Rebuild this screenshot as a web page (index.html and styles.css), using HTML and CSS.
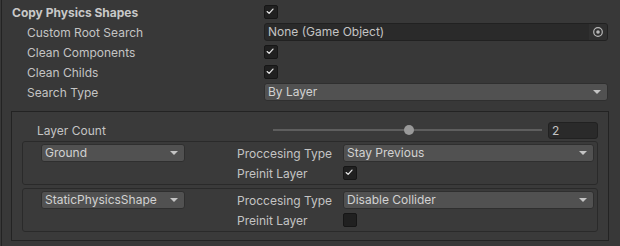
FILE: index.html
```html
<!DOCTYPE html>
<html lang="en">
<head>
    <meta charset="UTF-8">
    <title>Copy Physics Shapes</title>
    <link rel="stylesheet" href="styles.css">
</head>
<body>
    <div class="inspector">
        <div class="row">
            <span class="label header">Copy Physics Shapes</span>
            <span class="toggle on"><svg viewBox="0 0 14 14"><path d="M3.5 7.5 L5.8 9.6 L10.3 4.6"/></svg></span>
        </div>
        <div class="row">
            <span class="label sub">Custom Root Search</span>
            <div class="object-field">
                <span class="object-name">None (Game Object)</span>
                <span class="picker"><svg viewBox="0 0 18 16"><circle cx="9" cy="8" r="4.3"/><circle class="dot" cx="9" cy="8" r="1.8"/></svg></span>
            </div>
        </div>
        <div class="row">
            <span class="label sub">Clean Components</span>
            <span class="toggle on"><svg viewBox="0 0 14 14"><path d="M3.5 7.5 L5.8 9.6 L10.3 4.6"/></svg></span>
        </div>
        <div class="row">
            <span class="label sub">Clean Childs</span>
            <span class="toggle on"><svg viewBox="0 0 14 14"><path d="M3.5 7.5 L5.8 9.6 L10.3 4.6"/></svg></span>
        </div>
        <div class="row">
            <span class="label sub">Search Type</span>
            <div class="popup wide">By Layer<span class="arrow"></span></div>
        </div>

        <div class="layer-box">
            <div class="count-row">
                <span class="count-label">Layer Count</span>
                <div class="slider">
                    <span class="track"></span>
                    <span class="thumb"></span>
                </div>
                <div class="number-field">2</div>
            </div>

            <div class="layer-item">
                <div class="popup layer">Ground<span class="arrow"></span></div>
                <span class="item-label">Proccesing Type</span>
                <div class="popup">Stay Previous<span class="arrow"></span></div>
                <span></span>
                <span class="item-label">Preinit Layer</span>
                <span class="toggle on"><svg viewBox="0 0 14 14"><path d="M3.5 7.5 L5.8 9.6 L10.3 4.6"/></svg></span>
            </div>

            <div class="layer-item">
                <div class="popup layer">StaticPhysicsShape<span class="arrow"></span></div>
                <span class="item-label">Proccesing Type</span>
                <div class="popup">Disable Collider<span class="arrow"></span></div>
                <span></span>
                <span class="item-label">Preinit Layer</span>
                <span class="toggle"></span>
            </div>
        </div>
    </div>
</body>
</html>
```

FILE: styles.css
```css
body {
    margin: 0;
    background: #383838;
    font-family: Inter, "Noto Sans", sans-serif;
    font-size: 12px;
    color: #c4c4c4;
}

.inspector {
    margin-left: 1px;
    border-left: 1px solid #232323;
    height: 246px;
    box-sizing: border-box;
    padding: 3px 11px 0 9px;
}

.row {
    display: flex;
    align-items: center;
    height: 18px;
    margin-bottom: 2px;
    padding-right: 1px;
}

.label {
    width: 253px;
    box-sizing: border-box;
    flex-shrink: 0;
    white-space: nowrap;
}

.header {
    font-weight: 700;
    padding-left: 1px;
    color: #c8c8c8;
}

.sub {
    padding-left: 16px;
}

.toggle {
    width: 12px;
    height: 12px;
    background: #202020;
    border: 1px solid #161616;
    border-radius: 2px;
    display: flex;
}

.toggle svg {
    width: 12px;
    height: 12px;
}

.toggle path {
    fill: none;
    stroke: #e4e4e4;
    stroke-width: 1.5;
    stroke-linecap: round;
    stroke-linejoin: round;
    transform: translate(-1px, -1px);
}

.object-field {
    flex: 1;
    display: flex;
    height: 16px;
    background: #2a2a2a;
    border: 1px solid #212121;
    border-radius: 3px;
    overflow: hidden;
}

.object-name {
    flex: 1;
    padding-left: 3px;
    line-height: 16px;
}

.picker {
    width: 18px;
    background: #303030;
    display: flex;
}

.picker svg {
    width: 18px;
    height: 16px;
}

.picker circle {
    fill: none;
    stroke: #b8b8b8;
    stroke-width: 1.2;
}

.picker .dot {
    fill: #b8b8b8;
    stroke: none;
}

.popup {
    position: relative;
    height: 16px;
    line-height: 16px;
    background: #515151;
    border: 1px solid #2f2f2f;
    border-radius: 3px;
    padding-left: 3px;
    white-space: nowrap;
    color: #d2d2d2;
}

.wide {
    flex: 1;
}

.arrow {
    position: absolute;
    right: 6px;
    top: 6px;
    border-left: 4px solid transparent;
    border-right: 4px solid transparent;
    border-top: 4px solid #c4c4c4;
}

.layer-box {
    margin-top: 10px;
    border: 1px solid #232323;
    background: #3a3a3a;
    padding: 9px 10px 8px 10px;
}

.count-row {
    display: flex;
    align-items: center;
    height: 18px;
    margin-bottom: 2px;
}

.count-label {
    width: 236px;
    padding-left: 15px;
    flex-shrink: 0;
}

.slider {
    position: relative;
    flex: 1;
    height: 18px;
    margin-right: 6px;
}

.track {
    position: absolute;
    left: 0;
    right: 0;
    top: 8px;
    height: 2px;
    background: #5e5e5e;
}

.thumb {
    position: absolute;
    left: 131px;
    top: 4px;
    width: 10px;
    height: 10px;
    border-radius: 50%;
    background: #999999;
}

.number-field {
    width: 45px;
    height: 15px;
    line-height: 15px;
    background: #2a2a2a;
    border: 1px solid #212121;
    border-radius: 3px;
    padding-left: 3px;
}

.layer-item {
    display: grid;
    grid-template-columns: 196px 106px 1fr;
    row-gap: 2px;
    align-items: center;
    grid-auto-rows: 18px;
    border: 1px solid #2a2a2a;
    border-radius: 3px;
    padding: 2px 3px 2px 18px;
    margin-bottom: 3px;
}

.layer-item:last-child {
    margin-bottom: 0;
}

.layer-item .layer {
    width: 139px;
}

.layer-item .toggle {
    justify-self: start;
}

.item-label {
    white-space: nowrap;
}
```
